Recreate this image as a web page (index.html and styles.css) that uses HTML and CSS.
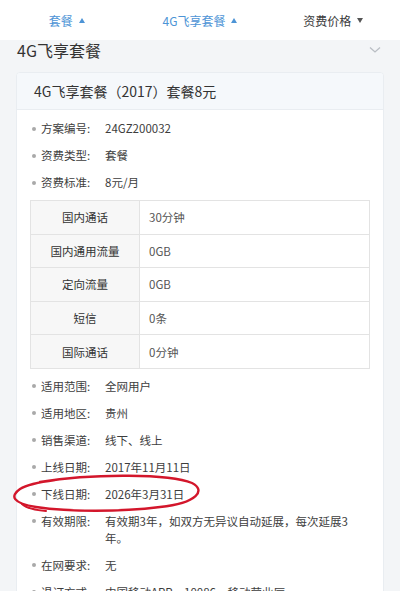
FILE: index.html
```html
<!DOCTYPE html>
<html lang="zh">
<head>
<meta charset="utf-8">
<link rel="stylesheet" href="styles.css">
</head>
<body>
<nav class="tabs">
  <div class="tab active">套餐 <span class="tri up"></span></div>
  <div class="tab active">4G飞享套餐 <span class="tri up"></span></div>
  <div class="tab">资费价格 <span class="tri down"></span></div>
</nav>
<main class="content">
  <div class="section-head">
    <span class="section-title">4G飞享套餐</span>
    <svg class="chev" width="12" height="8" viewBox="0 0 12 8"><path d="M1 1.5 L6 6 L11 1.5" fill="none" stroke="#b9bec4" stroke-width="1.3"/></svg>
  </div>
  <div class="card">
    <div class="card-head">4G飞享套餐（2017）套餐8元</div>
    <div class="card-body">
      <div class="row"><span class="label">方案编号:</span><span class="value">24GZ200032</span></div>
      <div class="row"><span class="label">资费类型:</span><span class="value">套餐</span></div>
      <div class="row"><span class="label">资费标准:</span><span class="value">8元/月</span></div>
      <table class="spec">
        <tr><th>国内通话</th><td>30分钟</td></tr>
        <tr><th>国内通用流量</th><td>0GB</td></tr>
        <tr><th>定向流量</th><td>0GB</td></tr>
        <tr><th>短信</th><td>0条</td></tr>
        <tr><th>国际通话</th><td>0分钟</td></tr>
      </table>
      <div class="row"><span class="label">适用范围:</span><span class="value">全网用户</span></div>
      <div class="row"><span class="label">适用地区:</span><span class="value">贵州</span></div>
      <div class="row"><span class="label">销售渠道:</span><span class="value">线下、线上</span></div>
      <div class="row"><span class="label">上线日期:</span><span class="value">2017年11月11日</span></div>
      <div class="row"><span class="label">下线日期:</span><span class="value">2026年3月31日</span></div>
      <div class="row"><span class="label">有效期限:</span><span class="value">有效期3年，如双方无异议自动延展，每次延展3年。</span></div>
      <div class="row"><span class="label">在网要求:</span><span class="value">无</span></div>
      <div class="row"><span class="label">退订方式:</span><span class="value">中国移动APP、10086、移动营业厅</span></div>
    </div>
  </div>
</main>
<svg class="circle" width="220" height="50" viewBox="0 0 220 50">
  <path d="M40 8 C 95 -1, 170 0, 192 9 C 206 16, 198 29, 160 33 C 120 38, 70 38, 36 33 C 12 29, 10 22, 20 15 C 28 10, 40 8, 55 6" fill="none" stroke="#d3162b" stroke-width="2.4" stroke-linecap="round"/>
  <path d="M22 30 C 26 34, 34 36, 46 37" fill="none" stroke="#d3162b" stroke-width="2" stroke-linecap="round"/>
</svg>
</body>
</html>
```
FILE: styles.css
```css
* { box-sizing: border-box; }
html, body {
  margin: 0;
  padding: 0;
}
body {
  position: relative;
  width: 400px;
  height: 591px;
  overflow: hidden;
  background: #f3f5f7;
  font-family: "Noto Sans CJK SC", "Noto Sans", sans-serif;
  color: #333;
}
.tabs {
  display: flex;
  height: 40px;
  background: #fff;
  align-items: center;
}
.tab {
  flex: 1;
  display: flex;
  justify-content: center;
  align-items: center;
  gap: 6px;
  font-size: 12px;
  color: #3a3a3a;
  padding-top: 1px;
}
.tab.active { color: #4d94d6; }
.tri {
  width: 0;
  height: 0;
  border-left: 3.5px solid transparent;
  border-right: 3.5px solid transparent;
}
.tri.up { border-bottom: 5px solid #4d94d6; }
.tri.down { border-top: 5px solid #555; }
.content {
  padding: 0 16px;
}
.section-head {
  display: flex;
  justify-content: space-between;
  align-items: flex-start;
  height: 32px;
  padding-left: 1px;
}
.section-title {
  font-size: 16px;
  line-height: 20px;
  color: #333;
}
.chev { margin-right: 3px; margin-top: 6px; }
.card {
  background: #fff;
  border: 1px solid #e9edf1;
  border-radius: 4px;
  overflow: hidden;
}
.card-head {
  height: 37px;
  display: flex;
  align-items: center;
  padding-left: 17px;
  font-size: 14px;
  background: #f5f8fb;
  border-bottom: 1px solid #e9edf1;
  color: #333;
}
.card-body {
  padding: 5px 13px 0 13px;
}
.row {
  display: flex;
  padding: 5px 0;
  line-height: 17px;
  font-size: 11.5px;
}
.label {
  position: relative;
  width: 75px;
  flex: none;
  padding-left: 11px;
  color: #3d3d3d;
}
.label::before {
  content: "";
  position: absolute;
  left: 2px;
  top: 6.5px;
  width: 4px;
  height: 4px;
  border-radius: 50%;
  background: #a9a9a9;
}
.value {
  width: 246px;
  color: #3d3d3d;
}
.spec {
  width: 340px;
  margin: 4px 0 4px 0;
  border-collapse: collapse;
  border: 1px solid #e3e3e3;
  font-size: 11.5px;
}
.spec th, .spec td {
  height: 33.6px;
  border: 1px solid #e3e3e3;
  font-weight: normal;
  padding: 0;
}
.spec th {
  width: 109px;
  background: #f7f7f7;
  text-align: center;
  color: #333;
}
.spec td {
  padding-left: 9px;
  color: #555;
}
.circle {
  position: absolute;
  left: 0;
  top: 474px;
}
```
